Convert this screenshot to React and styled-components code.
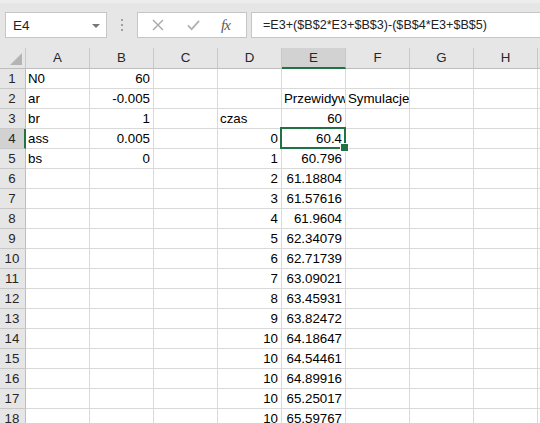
import React from "react";
import styled, { createGlobalStyle } from "styled-components";

const GlobalStyle = createGlobalStyle`
  html, body { margin: 0; padding: 0; background: #ffffff; overflow: hidden; }
  body { font-family: "Liberation Sans", Arial, sans-serif; }
  * { box-sizing: border-box; }
`;

const Page = styled.div`
  width: 540px;
  height: 423px;
  overflow: hidden;
  background: #fff;
`;

const Toolbar = styled.div`
  height: 48px;
  background: #e6e6e6;
  border-top: 3px solid #ededed;
  padding-top: 9px;
  display: flex;
  align-items: flex-start;
`;

const NameBox = styled.div`
  margin-left: 5px;
  width: 102px;
  height: 26px;
  background: #fff;
  border: 1px solid #c6c6c6;
  display: flex;
  align-items: center;
  padding-left: 7px;
  padding-right: 6px;
  font-size: 13.5px;
  color: #222;
  justify-content: space-between;
`;

const DropArrow = styled.span`
  width: 0;
  height: 0;
  border-left: 4px solid transparent;
  border-right: 4px solid transparent;
  border-top: 4px solid #767676;
  margin-top: 1px;
`;

const Dots = styled.div`
  width: 30px;
  height: 26px;
  display: flex;
  flex-direction: column;
  align-items: center;
  justify-content: center;
  gap: 3px;
  & > span {
    width: 2px;
    height: 2px;
    background: #a0a0a0;
  }
`;

const ButtonsBox = styled.div`
  width: 110px;
  height: 26px;
  background: #fff;
  border: 1px solid #c6c6c6;
  display: flex;
  align-items: center;
  padding-left: 13px;
  gap: 23px;
`;

const IconBtn = styled.span`
  width: 13px;
  height: 13px;
  display: flex;
  align-items: center;
  justify-content: center;
`;

const Fx = styled.span`
  font-family: "Liberation Serif", "Times New Roman", serif;
  font-style: italic;
  font-size: 15px;
  color: #5a5a5a;
  margin-left: -2px;
  letter-spacing: -1px;
`;

const FormulaBox = styled.div`
  margin-left: 4px;
  flex: 1;
  height: 26px;
  background: #fff;
  border: 1px solid #c6c6c6;
  border-right: none;
  display: flex;
  align-items: center;
  padding-left: 11px;
  font-size: 12.6px;
  color: #222;
  white-space: nowrap;
  overflow: hidden;
`;

const Grid = styled.div`
  display: grid;
  grid-template-columns: 26px repeat(8, 64px) 20px;
  grid-auto-rows: 20px;
  grid-template-rows: 21px;
  font-size: 13.3px;
  color: #000;
`;

const Corner = styled.div`
  background: #e6e6e6;
  border-right: 1px solid #c8c8c8;
  border-bottom: 1px solid #bdbdbd;
  position: relative;
  &::after {
    content: "";
    position: absolute;
    right: 3px;
    bottom: 3px;
    width: 0;
    height: 0;
    border-left: 12px solid transparent;
    border-bottom: 12px solid #b4b4b4;
  }
`;

const ColHead = styled.div`
  background: ${(p) => (p.$active ? "#d2d2d2" : "#e6e6e6")};
  border-right: 1px solid #c8c8c8;
  border-bottom: ${(p) => (p.$active ? "2px solid #217346" : "1px solid #bdbdbd")};
  display: flex;
  align-items: center;
  justify-content: center;
  color: #262626;
  padding-bottom: ${(p) => (p.$active ? "0" : "1px")};
`;

const RowHead = styled.div`
  background: ${(p) => (p.$active ? "#d2d2d2" : "#e6e6e6")};
  border-right: ${(p) => (p.$active ? "2px solid #217346" : "1px solid #bdbdbd")};
  border-bottom: 1px solid #c8c8c8;
  display: flex;
  align-items: flex-end;
  justify-content: center;
  line-height: 18px;
  color: #262626;
  padding-right: ${(p) => (p.$active ? "0" : "1px")};
`;

const Cell = styled.div`
  position: relative;
  border-right: 1px solid #d9d9d9;
  border-bottom: 1px solid #d9d9d9;
  display: flex;
  align-items: flex-end;
  justify-content: ${(p) => (p.$right ? "flex-end" : "flex-start")};
  padding: 0 3px 0 2px;
  line-height: 18px;
  white-space: nowrap;
  overflow: ${(p) => (p.$selected ? "visible" : "hidden")};
  z-index: ${(p) => (p.$selected ? 2 : 0)};
`;

const Selection = styled.span`
  position: absolute;
  left: -2px;
  top: -2px;
  right: -1px;
  bottom: -1px;
  border: 2px solid #217346;
  pointer-events: none;
  &::after {
    content: "";
    position: absolute;
    right: -5px;
    bottom: -5px;
    width: 7px;
    height: 7px;
    background: #217346;
    border: 1px solid #fff;
  }
`;

const cols = ["A", "B", "C", "D", "E", "F", "G", "H", ""];

const eValues = [
  "60.4", "60.796", "61.18804", "61.57616", "61.9604", "62.34079", "62.71739",
  "63.09021", "63.45931", "63.82472", "64.18647", "64.54461", "64.89916",
  "65.25017", "65.59767",
];
const dValues = ["0", "1", "2", "3", "4", "5", "6", "7", "8", "9", "10", "10", "10", "10", "10"];

function buildRows() {
  const rows = [];
  for (let r = 1; r <= 18; r++) rows.push({});
  const set = (r, c, v, right = false) => (rows[r - 1][c] = { v, right });
  set(1, "A", "N0"); set(1, "B", "60", true);
  set(2, "A", "ar"); set(2, "B", "-0.005", true);
  set(2, "E", "Przewidywania"); set(2, "F", "Symulacje");
  set(3, "A", "br"); set(3, "B", "1", true);
  set(3, "D", "czas"); set(3, "E", "60", true);
  set(4, "A", "ass"); set(4, "B", "0.005", true);
  set(5, "A", "bs"); set(5, "B", "0", true);
  for (let i = 0; i < eValues.length; i++) {
    set(4 + i, "D", dValues[i], true);
    set(4 + i, "E", eValues[i], true);
  }
  return rows;
}

const rows = buildRows();

export default function App() {
  return (
    <Page>
      <GlobalStyle />
      <Toolbar>
        <NameBox>
          <span>E4</span>
          <DropArrow />
        </NameBox>
        <Dots>
          <span />
          <span />
          <span />
        </Dots>
        <ButtonsBox>
          <IconBtn>
            <svg width="12" height="12" viewBox="0 0 12 12">
              <path d="M1 1 L11 11 M11 1 L1 11" stroke="#a8a8a8" strokeWidth="1.4" fill="none" />
            </svg>
          </IconBtn>
          <IconBtn>
            <svg width="14" height="12" viewBox="0 0 14 12">
              <path d="M1 6.5 L5 10.5 L13 1.5" stroke="#b0b0b0" strokeWidth="1.8" fill="none" />
            </svg>
          </IconBtn>
          <Fx>fx</Fx>
        </ButtonsBox>
        <FormulaBox>=E3+($B$2*E3+$B$3)-($B$4*E3+$B$5)</FormulaBox>
      </Toolbar>
      <Grid>
        <Corner />
        {cols.map((c, i) => (
          <ColHead key={i} $active={c === "E"}>{c}</ColHead>
        ))}
        {rows.map((row, ri) => (
          <React.Fragment key={ri}>
            <RowHead $active={ri === 3}>{ri + 1}</RowHead>
            {cols.map((c, ci) => {
              const cell = row[c];
              const selected = ri === 3 && c === "E";
              return (
                <Cell key={ci} $right={cell && cell.right} $selected={selected}>
                  {cell ? cell.v : ""}
                  {selected && <Selection />}
                </Cell>
              );
            })}
          </React.Fragment>
        ))}
      </Grid>
    </Page>
  );
}
